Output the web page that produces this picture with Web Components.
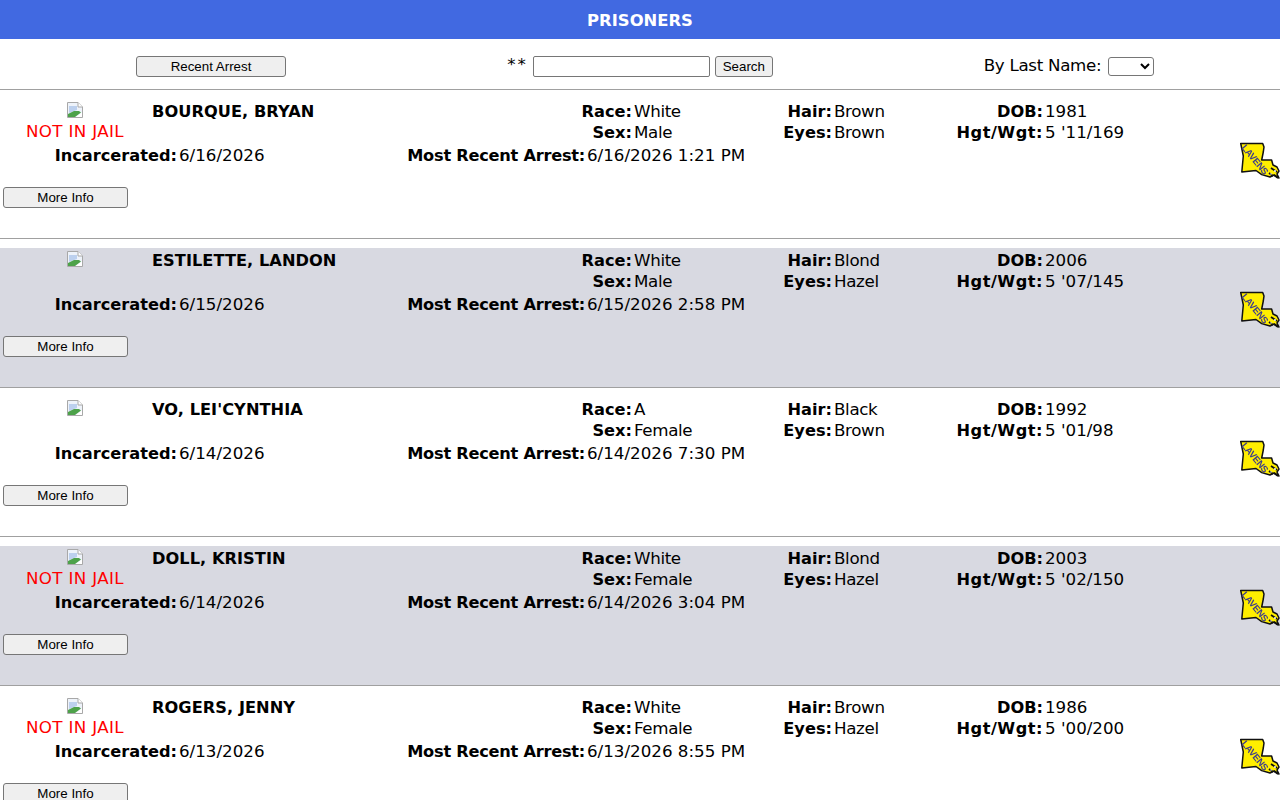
<!DOCTYPE html>
<html>
<head>
<meta charset="utf-8">
<title>Prisoners</title>
<style>
  html, body { margin: 0; padding: 0; height: 800px; overflow: hidden; background: #fff; }
  body { font: 16.7px "DejaVu Sans", Verdana, sans-serif; color: #000; }
</style>
</head>
<body>
<page-header>PRISONERS</page-header>
<search-bar></search-bar>
<prisoner-row name="BOURQUE, BRYAN" race="White" sex="Male" hair="Brown" eyes="Brown" dob="1981" hw="5 '11/169" inc="6/16/2026" arrest="6/16/2026 1:21 PM" out></prisoner-row>
<prisoner-row shaded name="ESTILETTE, LANDON" race="White" sex="Male" hair="Blond" eyes="Hazel" dob="2006" hw="5 '07/145" inc="6/15/2026" arrest="6/15/2026 2:58 PM"></prisoner-row>
<prisoner-row name="VO, LEI'CYNTHIA" race="A" sex="Female" hair="Black" eyes="Brown" dob="1992" hw="5 '01/98" inc="6/14/2026" arrest="6/14/2026 7:30 PM"></prisoner-row>
<prisoner-row shaded name="DOLL, KRISTIN" race="White" sex="Female" hair="Blond" eyes="Hazel" dob="2003" hw="5 '02/150" inc="6/14/2026" arrest="6/14/2026 3:04 PM" out></prisoner-row>
<prisoner-row name="ROGERS, JENNY" race="White" sex="Female" hair="Brown" eyes="Hazel" dob="1986" hw="5 '00/200" inc="6/13/2026" arrest="6/13/2026 8:55 PM" out></prisoner-row>

<script>
const BTN_CSS = `
  button {
    font: 13.33px "Liberation Sans", Arial, sans-serif;
    background: #efefef;
    border: 1px solid #767676;
    border-radius: 3px;
    color: #000;
    padding: 0;
    height: 21px;
    box-sizing: border-box;
  }
`;

class PageHeader extends HTMLElement {
  constructor() {
    super();
    this.attachShadow({ mode: "open" });
    this.shadowRoot.innerHTML = `
      <style>
        :host {
          display: flex;
          height: 39px;
          box-sizing: border-box;
          padding-top: 1px;
          align-items: center;
          justify-content: center;
          background: #4169e1;
          color: #fff;
          font-weight: bold;
          font-size: 16.4px;
        }
      </style>
      <slot></slot>
    `;
  }
}

class SearchBar extends HTMLElement {
  constructor() {
    super();
    this.attachShadow({ mode: "open" });
    this.shadowRoot.innerHTML = `
      <style>
        ${BTN_CSS}
        :host {
          display: grid;
          grid-template-columns: 422px 436px 422px;
          height: 50px;
          box-sizing: border-box;
          padding-top: 5px;
          align-items: center;
        }
        .cell { display: flex; justify-content: center; align-items: center; }
        #recent { width: 150px; }
        .find { gap: 5px; }
        .stars { margin-top: -5px; letter-spacing: 2px; }
        input {
          width: 177px;
          height: 21px;
          box-sizing: border-box;
          border: 1px solid #767676;
          border-radius: 2px;
          padding: 1px 2px;
          margin: 0;
          background: #fff;
        }
        #search { width: 58px; }
        .last { gap: 7px; }
        .last span { margin-top: -3px; letter-spacing: -.3px; }
        select {
          width: 46px;
          height: 19px;
          box-sizing: border-box;
          border: 1px solid #767676;
          border-radius: 3px;
          background: #fff;
          margin: 0;
        }
      </style>
      <div class="cell"><button id="recent">Recent Arrest</button></div>
      <div class="cell find"><span class="stars">**</span><input type="text"><button id="search">Search</button></div>
      <div class="cell last"><span>By Last Name:</span><select></select></div>
    `;
  }
}

class PrisonerRow extends HTMLElement {
  constructor() {
    super();
    this.attachShadow({ mode: "open" });
  }

  connectedCallback() {
    const a = n => (this.getAttribute(n) || "");
    const notInJail = this.hasAttribute("out") ? `<div class="out">NOT IN JAIL</div>` : "";

    this.shadowRoot.innerHTML = `
      <style>
        ${BTN_CSS}
        :host { display: block; border-top: 1px solid #a0a0a0; height: 148px; position: relative; }
        .body { height: 139px; margin-top: 9px; }
        :host([shaded]) .body { background: #d8d9e1; }
        :host(:not([shaded])) .body { margin-top: 0; height: 148px; padding-top: 9px; box-sizing: border-box; }
        .top {
          display: grid;
          grid-template-columns: 150px 330px 152px 200px 211px 1fr;
          grid-auto-rows: 21px;
          padding-top: 2px;
        }
        .photo { grid-row: 1 / span 2; display: flex; flex-direction: column; align-items: center; height: 42px; }
        .photo svg { display: block; margin-top: 1px; flex: none; }
        .out { color: #f00; font-size: 16.7px; letter-spacing: .35px; line-height: 21px; margin-top: 3px; white-space: nowrap; }
        .name { font-weight: bold; font-size: 16.2px; letter-spacing: .05px; padding-left: 2px; line-height: 21px; white-space: nowrap; }
        .pair { display: flex; justify-content: flex-end; line-height: 21px; white-space: nowrap; position: relative; }
        .k { font-weight: bold; font-size: 16.2px; }
        .tight { letter-spacing: -.25px; }
        .wide { letter-spacing: .5px; }
        .v { position: absolute; left: calc(100% + 2px); }
        .w { letter-spacing: -.35px; }
        .mid { display: grid; grid-template-columns: 177px 408px 1fr; line-height: 21px; margin-top: 2px; height: 21px; }
        .btn { padding: 20px 0 0 3px; }
        .btn button { width: 125px; }
        .logo { position: absolute; right: 0; top: 52px; filter: blur(.3px); }
      </style>
      <div class="body">
        <div class="top">
          <div class="photo">
            <svg width="16" height="16" viewBox="0 0 16 16">
              <path d="M.5 .5H11L15.500 5V15.500H.5Z" fill="#eef3fa" stroke="#a8a8a8"/>
              <path d="M11 .5V5H15.500" fill="#fff" stroke="#a8a8a8"/>
              <path d="M2 4H10V8L2 11Z" fill="#bcd0ee"/>
              <path d="M1 15V12L7 9L12 9L14 10.500L8 15Z" fill="#4da24a"/>
              <path d="M9 15L15 10.500V15Z" fill="#fff"/>
            </svg>
            ${notInJail}
          </div>
          <div class="name">${a("name")}</div>
          <div class="pair"><span class="k">Race:</span><span class="v w">${a("race")}</span></div>
          <div class="pair"><span class="k">Hair:</span><span class="v w">${a("hair")}</span></div>
          <div class="pair"><span class="k">DOB:</span><span class="v">${a("dob")}</span></div>
          <div></div>
          <div></div>
          <div class="pair"><span class="k">Sex:</span><span class="v w">${a("sex")}</span></div>
          <div class="pair"><span class="k">Eyes:</span><span class="v w">${a("eyes")}</span></div>
          <div class="pair"><span class="k wide">Hgt/Wgt:</span><span class="v">${a("hw")}</span></div>
        </div>
        <div class="mid">
          <div class="pair"><span class="k">Incarcerated:</span><span class="v">${a("inc")}</span></div>
          <div class="pair"><span class="k tight">Most Recent Arrest:</span><span class="v">${a("arrest")}</span></div>
        </div>
        <div class="btn"><button>More Info</button></div>
      </div>
      <svg class="logo" width="40" height="38" viewBox="0 0 40 38">
        <path d="M.7 1.500H22.700L24 5L23.300 10L21.700 18L31.600 18L33 23L37 25L39 29L37 32L39 36L34 33L30 35L21.700 32.600L16 28.500L1.800 30L3.300 14Z" fill="#ffee00" stroke="#111" stroke-width="1.500" stroke-linejoin="round"/>
        <path d="M31 26l6 4M29 31l4 3M34 33l4 3" stroke="#111" stroke-width="1.800" fill="none"/>
        <circle cx="35" cy="29" r="1" fill="#fff"/>
        <circle cx="31" cy="32" r=".8" fill="#fff"/>
        <text x="1" y="6" transform="rotate(50 1 6)" font-family="Liberation Sans, sans-serif" font-size="9.500" font-weight="bold" fill="#3f3d8a" textLength="36" lengthAdjust="spacing">LAVENS</text>
      </svg>
    `;
  }
}

customElements.define("page-header", PageHeader);
customElements.define("search-bar", SearchBar);
customElements.define("prisoner-row", PrisonerRow);
</script>
</body>
</html>
